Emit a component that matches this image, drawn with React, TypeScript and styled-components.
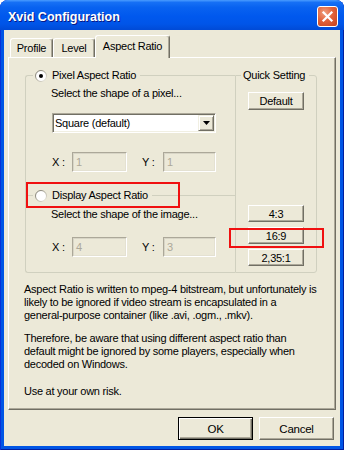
import React from "react";
import styled, { createGlobalStyle } from "styled-components";

const GlobalStyle = createGlobalStyle`
  html, body {
    margin: 0;
    padding: 0;
    background: #ffffff;
  }
  body {
    font-family: "Liberation Sans", Arial, sans-serif;
    font-size: 11px;
    letter-spacing: -0.25px;
    color: #000000;
  }
`;

const Window = styled.div`
  width: 344px;
  height: 450px;
  box-sizing: border-box;
  display: flex;
  flex-direction: column;
  background: #0055e5;
  border-radius: 8px 8px 0 0;
  overflow: hidden;
  box-shadow: inset 1px 0 #0831d9, inset -1px 0 #001ea0, inset 0 -1px #001ea0;
`;

const TitleBar = styled.div`
  height: 30px;
  flex: none;
  display: flex;
  align-items: center;
  justify-content: space-between;
  padding: 0 6px 0 8px;
  background: linear-gradient(
    to bottom,
    #4a9cff 0%,
    #1670f5 8%,
    #0862f0 25%,
    #0058ee 55%,
    #0055e8 80%,
    #004ad6 100%
  );
`;

const Title = styled.span`
  color: #ffffff;
  font-weight: bold;
  font-size: 12.5px;
  letter-spacing: 0;
  padding-top: 3px;
  text-shadow: 1px 1px #0a1883;
`;

const CloseButton = styled.div`
  width: 21px;
  height: 21px;
  box-sizing: border-box;
  margin-top: 2px;
  border: 1px solid #ffffff;
  border-radius: 3px;
  background: radial-gradient(circle at 35% 30%, #f0a080 0%, #e2633b 45%, #c4401c 100%);
  display: flex;
  align-items: center;
  justify-content: center;
`;

const Body = styled.div`
  flex: 1;
  display: flex;
  flex-direction: column;
  margin: 0 4px 4px;
  padding: 5px 4px 6px;
  background: #ece9d8;
`;

const TabRow = styled.div`
  display: flex;
  align-items: flex-end;
  height: 22px;
  padding-left: 2px;
`;

const Tab = styled.div<{ $active?: boolean; $w: number }>`
  box-sizing: border-box;
  width: ${(p) => p.$w}px;
  height: ${(p) => (p.$active ? 23 : 19)}px;
  margin-bottom: ${(p) => (p.$active ? -1 : 0)}px;
  padding-bottom: ${(p) => (p.$active ? 2 : 0)}px;
  display: flex;
  align-items: center;
  justify-content: center;
  background: #ece9d8;
  border: 1px solid #ffffff;
  border-right-color: #716f64;
  border-bottom: none;
  border-radius: 3px 3px 0 0;
  box-shadow: inset -1px 0 #aca899;
  position: relative;
  z-index: ${(p) => (p.$active ? 1 : 0)};
`;

const Panel = styled.div`
  flex: 1;
  box-sizing: border-box;
  display: flex;
  flex-direction: column;
  border: 1px solid #ffffff;
  border-right-color: #716f64;
  border-bottom-color: #716f64;
  box-shadow: inset -1px -1px #aca899;
  padding: 11px 18px 0 16px;
`;

const GroupRow = styled.div`
  display: flex;
  align-items: stretch;
`;

const Group = styled.fieldset<{ $side: "left" | "right" }>`
  margin: 0;
  min-inline-size: 0;
  box-sizing: border-box;
  border: 1px solid #d0d0bf;
  ${(p) =>
    p.$side === "left"
      ? `width: 210px; border-right: none; border-radius: 3px 0 0 3px; padding: 0 0 15px 0;`
      : `flex: 1; border-radius: 0 3px 3px 0; padding: 0 0 6px 0; display: flex; flex-direction: column; align-items: center;`}
`;

const SubGroup = styled.fieldset`
  margin: 17px 0 0;
  padding: 0;
  min-inline-size: 0;
  border: none;
  border-top: 1px solid #d0d0bf;
`;

const Legend = styled.legend<{ $offset: number }>`
  margin-left: ${(p) => p.$offset}px;
  padding: 0 4px 0 2px;
  line-height: 13px;
  height: 13px;
`;

const LegendInner = styled.span`
  display: inline-flex;
  align-items: center;
  gap: 5px;
  height: 13px;
  position: relative;
`;

const Section = styled.div`
  padding-left: 25px;
`;

const Line = styled.div<{ $mt: number }>`
  margin-top: ${(p) => p.$mt}px;
  line-height: 13px;
  white-space: nowrap;
`;

const Combo = styled.div`
  width: 164px;
  height: 20px;
  box-sizing: border-box;
  margin: 13px 0 0 1px;
  display: flex;
  align-items: center;
  background: #ffffff;
  border: 1px solid;
  border-color: #aca899 #ffffff #ffffff #aca899;
  box-shadow: inset 1px 1px #716f64, inset -1px -1px #f1efe2;
  padding: 2px;
`;

const ComboText = styled.span`
  flex: 1;
  line-height: 14px;
`;

const ComboArrow = styled.div`
  width: 16px;
  height: 16px;
  margin-right: -1px;
  box-sizing: border-box;
  background: #ece9d8;
  border: 1px solid;
  border-color: #f1efe2 #716f64 #716f64 #f1efe2;
  box-shadow: inset 1px 1px #ffffff, inset -1px -1px #aca899;
  display: flex;
  align-items: center;
  justify-content: center;
`;

const FieldRow = styled.div<{ $mt: number }>`
  display: flex;
  align-items: center;
  margin: ${(p) => p.$mt}px 0 0 1px;
`;

const FieldLabel = styled.span<{ $w: number; $ml?: number }>`
  width: ${(p) => p.$w}px;
  margin-left: ${(p) => p.$ml ?? 0}px;
`;

const Field = styled.div<{ $w: number }>`
  width: ${(p) => p.$w}px;
  height: 20px;
  box-sizing: border-box;
  border: 1px solid;
  border-color: #aca899 #ffffff #ffffff #aca899;
  box-shadow: inset 1px 1px #d8d5c6, inset -1px -1px #e4e1d2;
  padding-left: 3px;
  line-height: 18px;
  color: #aca899;
`;

const QuickButton = styled.div<{ $h: number; $mt: number }>`
  width: 56px;
  height: ${(p) => p.$h}px;
  margin-top: ${(p) => p.$mt}px;
  box-sizing: border-box;
  display: flex;
  align-items: center;
  justify-content: center;
  background: #ece9d8;
  border: 1px solid;
  border-color: #ffffff #716f64 #716f64 #ffffff;
  box-shadow: inset -1px -1px #aca899;
  position: relative;
`;

const Presets = styled.div`
  margin-top: auto;
  display: flex;
  flex-direction: column;
`;

const Note = styled.p<{ $mt: number }>`
  margin: ${(p) => p.$mt}px 0 0 -1px;
  line-height: 13px;
  white-space: nowrap;
`;

const ButtonRow = styled.div`
  display: flex;
  justify-content: flex-end;
  gap: 6px;
  margin-top: 7px;
  padding-right: 2px;
`;

const DialogButton = styled.div<{ $default?: boolean }>`
  width: 75px;
  height: 23px;
  box-sizing: border-box;
  display: flex;
  align-items: center;
  justify-content: center;
  font-size: 11.5px;
  background: #ece9d8;
  border: 1px solid;
  border-color: ${(p) => (p.$default ? "#000000" : "#ffffff #716f64 #716f64 #ffffff")};
  box-shadow: ${(p) =>
    p.$default
      ? "inset 1px 1px #ffffff, inset -1px -1px #716f64, inset -2px -2px #aca899"
      : "inset -1px -1px #aca899"};
`;

const Highlight = styled.span<{ $l: number; $t: number; $w: number; $h: number }>`
  position: absolute;
  left: ${(p) => p.$l}px;
  top: ${(p) => p.$t}px;
  width: ${(p) => p.$w}px;
  height: ${(p) => p.$h}px;
  box-sizing: border-box;
  border: 2px solid #f01010;
  pointer-events: none;
`;

function Radio({ checked }: { checked?: boolean }) {
  const id = checked ? "radio-on" : "radio-off";
  return (
    <svg width="12" height="12" viewBox="0 0 12 12">
      <defs>
        <linearGradient id={id} x1="0" y1="0" x2="1" y2="1">
          <stop offset="0" stopColor="#716f64" />
          <stop offset="0.5" stopColor="#aca899" />
          <stop offset="1" stopColor="#f1efe2" />
        </linearGradient>
      </defs>
      <circle cx="6" cy="6" r="5.5" fill="#ffffff" stroke={`url(#${id})`} />
      {checked && <circle cx="6" cy="6" r="2" fill="#000000" />}
    </svg>
  );
}

export default function App() {
  return (
    <>
      <GlobalStyle />
      <Window>
        <TitleBar>
          <Title>Xvid Configuration</Title>
          <CloseButton>
            <svg width="13" height="13" viewBox="0 0 13 13">
              <path d="M2.5 2.5 L10.5 10.5 M10.5 2.5 L2.5 10.5" stroke="#ffffff" strokeWidth="2.2" strokeLinecap="square" />
            </svg>
          </CloseButton>
        </TitleBar>
        <Body>
          <TabRow>
            <Tab $w={43}>Profile</Tab>
            <Tab $w={42}>Level</Tab>
            <Tab $w={75} $active>
              Aspect Ratio
            </Tab>
          </TabRow>
          <Panel>
            <GroupRow>
              <Group $side="left">
                <Legend $offset={7}>
                  <LegendInner>
                    <Radio checked />
                    Pixel Aspect Ratio
                  </LegendInner>
                </Legend>
                <Section>
                  <Line $mt={5}>Select the shape of a pixel...</Line>
                  <Combo>
                    <ComboText>Square (default)</ComboText>
                    <ComboArrow>
                      <svg width="7" height="4" viewBox="0 0 7 4">
                        <path d="M0 0 H7 L3.5 4 Z" fill="#000000" />
                      </svg>
                    </ComboArrow>
                  </Combo>
                  <FieldRow $mt={19}>
                    <FieldLabel $w={20}>X :</FieldLabel>
                    <Field $w={55}>1</Field>
                    <FieldLabel $w={21} $ml={15}>
                      Y :
                    </FieldLabel>
                    <Field $w={53}>1</Field>
                  </FieldRow>
                </Section>
                <SubGroup>
                  <Legend $offset={7}>
                    <LegendInner>
                      <Radio />
                      Display Aspect Ratio
                      <Highlight $l={-9} $t={-7} $w={154} $h={26} />
                    </LegendInner>
                  </Legend>
                  <Section>
                    <Line $mt={6}>Select the shape of the image...</Line>
                    <FieldRow $mt={16}>
                      <FieldLabel $w={20}>X :</FieldLabel>
                      <Field $w={55}>4</Field>
                      <FieldLabel $w={21} $ml={15}>
                        Y :
                      </FieldLabel>
                      <Field $w={53}>3</Field>
                    </FieldRow>
                  </Section>
                </SubGroup>
              </Group>
              <Group $side="right">
                <Legend $offset={5}>Quick Setting</Legend>
                <QuickButton $h={18} $mt={10}>
                  Default
                </QuickButton>
                <Presets>
                  <QuickButton $h={17} $mt={0}>
                    4:3
                  </QuickButton>
                  <QuickButton $h={17} $mt={5}>
                    16:9
                    <Highlight $l={-20} $t={0} $w={95} $h={20} />
                  </QuickButton>
                  <QuickButton $h={17} $mt={5}>
                    2,35:1
                  </QuickButton>
                </Presets>
              </Group>
            </GroupRow>
            <Note $mt={10}>
              Aspect Ratio is written to mpeg-4 bitstream, but unfortunately is
              <br />
              likely to be ignored if video stream is encapsulated in a
              <br />
              general-purpose container (like .avi, .ogm., .mkv).
            </Note>
            <Note $mt={10}>
              Therefore, be aware that using different aspect ratio than
              <br />
              default might be ignored by some players, especially when
              <br />
              decoded on Windows.
            </Note>
            <Note $mt={14}>Use at your own risk.</Note>
          </Panel>
          <ButtonRow>
            <DialogButton $default>OK</DialogButton>
            <DialogButton>Cancel</DialogButton>
          </ButtonRow>
        </Body>
      </Window>
    </>
  );
}
